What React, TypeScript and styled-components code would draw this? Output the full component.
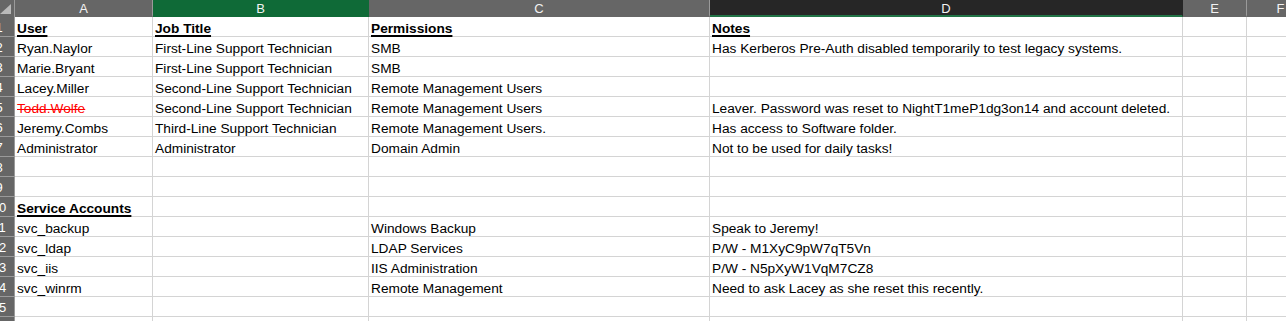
import styled, { createGlobalStyle } from "styled-components";

const GlobalStyle = createGlobalStyle`
  body {
    margin: 0;
    background: #ffffff;
  }
`;

type CellData = string | { text: string; struck?: boolean; bold?: boolean };

const columns = [
  { key: "A", width: 138 },
  { key: "B", width: 216, tone: "selected" },
  { key: "C", width: 341 },
  { key: "D", width: 473, tone: "active" },
  { key: "E", width: 64 },
  { key: "F", width: 68 },
];

const heading = (text: string) => ({ text, bold: true });

const rows: CellData[][] = [
  [heading("User"), heading("Job Title"), heading("Permissions"), heading("Notes")],
  [
    "Ryan.Naylor",
    "First-Line Support Technician",
    "SMB",
    "Has Kerberos Pre-Auth disabled temporarily to test legacy systems.",
  ],
  ["Marie.Bryant", "First-Line Support Technician", "SMB", ""],
  ["Lacey.Miller", "Second-Line Support Technician", "Remote Management Users", ""],
  [
    { text: "Todd.Wolfe", struck: true },
    "Second-Line Support Technician",
    "Remote Management Users",
    "Leaver. Password was reset to NightT1meP1dg3on14 and account deleted.",
  ],
  [
    "Jeremy.Combs",
    "Third-Line Support Technician",
    "Remote Management Users.",
    "Has access to Software folder.",
  ],
  ["Administrator", "Administrator", "Domain Admin", "Not to be used for daily tasks!"],
  [],
  [],
  [heading("Service Accounts")],
  ["svc_backup", "", "Windows Backup", "Speak to Jeremy!"],
  ["svc_ldap", "", "LDAP Services", "P/W - M1XyC9pW7qT5Vn"],
  ["svc_iis", "", "IIS Administration", "P/W - N5pXyW1VqM7CZ8"],
  ["svc_winrm", "", "Remote Management", "Need to ask Lacey as she reset this recently."],
  [],
  [],
];

const App = () => {
  return (
    <>
      <GlobalStyle />
      <Sheet>
        <Grid $cols={columns.map((c) => `${c.width}px`).join(" ")}>
          <Corner>
            <svg width="12" height="11" viewBox="0 0 12 11">
              <polygon points="11,0 11,10 0,10" fill="#b9b9b9" />
            </svg>
          </Corner>
          {columns.map((c) => (
            <ColHeader key={c.key} $tone={c.tone}>
              {c.key}
            </ColHeader>
          ))}
          {rows.map((row, r) => (
            <Row key={r}>
              <RowHead>
                <span>{r + 1}</span>
              </RowHead>
              {columns.map((c, i) => {
                const raw = row[i] ?? "";
                const cell = typeof raw === "string" ? { text: raw } : raw;
                return (
                  <Cell key={c.key}>
                    <CellText $bold={cell.bold} $struck={cell.struck}>
                      {cell.text}
                    </CellText>
                  </Cell>
                );
              })}
            </Row>
          ))}
        </Grid>
      </Sheet>
    </>
  );
};

export default App;

const Sheet = styled.div`
  width: 1286px;
  height: 321px;
  overflow: hidden;
  background: #ffffff;
  font-family: "Liberation Sans", Arial, sans-serif;
`;

const Grid = styled.div<{ $cols: string }>`
  display: grid;
  grid-template-columns: 31px ${(p) => p.$cols};
  grid-template-rows: 17px;
  grid-auto-rows: 20px;
  margin-left: -16px;
  width: max-content;
`;

const Row = styled.div`
  display: contents;
`;

const Corner = styled.div`
  background: #666666;
  border-right: 1px solid #9a9a9a;
  display: flex;
  align-items: flex-end;
  justify-content: flex-end;
  padding: 0 2px 2px 0;
`;

const ColHeader = styled.div<{ $tone?: string }>`
  box-sizing: border-box;
  background: ${(p) =>
    p.$tone === "selected" ? "#0f6a37" : p.$tone === "active" ? "#262626" : "#666666"};
  border-right: 1px solid
    ${(p) => (p.$tone === "selected" ? "#0f6a37" : p.$tone === "active" ? "#262626" : "#9a9a9a")};
  border-bottom: 2px solid ${(p) => (p.$tone === "active" ? "#217346" : "transparent")};
  color: #f2f2f2;
  font-size: 13px;
  display: flex;
  align-items: center;
  justify-content: center;
  padding-top: 2px;
`;

const RowHead = styled.div`
  box-sizing: border-box;
  background: #666666;
  border-right: 1px solid #9a9a9a;
  border-bottom: 1px solid #9a9a9a;
  color: #ffffff;
  font-size: 13px;
  display: flex;
  align-items: center;
  justify-content: center;
  padding-top: 2px;
`;

const Cell = styled.div`
  box-sizing: border-box;
  border-right: 1px solid #d4d4d4;
  border-bottom: 1px solid #d4d4d4;
  display: flex;
  align-items: flex-end;
  padding: 0 2px;
  white-space: nowrap;
`;

const CellText = styled.span<{ $bold?: boolean; $struck?: boolean }>`
  font-size: 13.7px;
  line-height: 14px;
  color: ${(p) => (p.$struck ? "#ff0000" : "#000000")};
  font-weight: ${(p) => (p.$bold ? 700 : 400)};
  text-decoration: ${(p) => (p.$bold ? "underline" : p.$struck ? "line-through" : "none")};
  text-decoration-thickness: ${(p) => (p.$bold ? "2px" : "1px")};
  text-underline-offset: 2px;
`;
